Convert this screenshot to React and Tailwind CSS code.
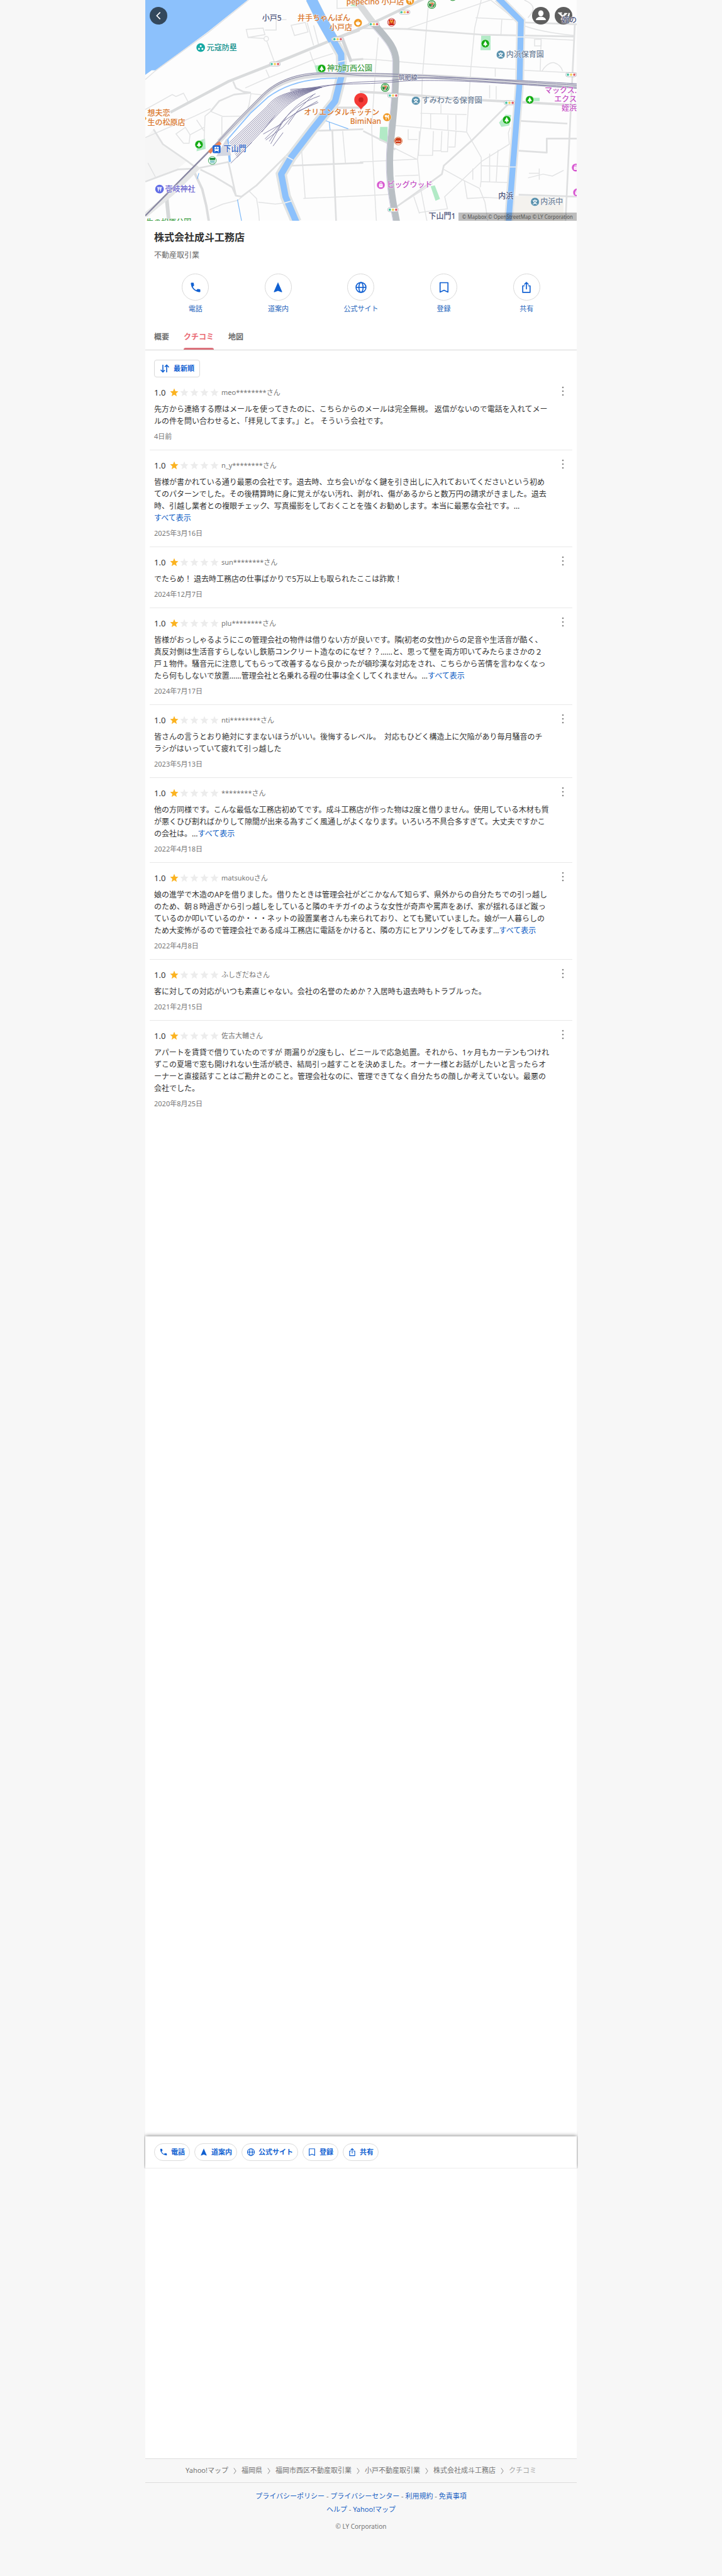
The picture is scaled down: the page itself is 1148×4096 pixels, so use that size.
import React, { useState } from "react";
import clsx from "clsx";

const reviews = [
  {
    user: "meo********さん",
    date: "4日前",
    lines: [
      "先方から連絡する際はメールを使ってきたのに、こちらからのメールは完全無視。 返信がないので電話を入れてメー",
      "ルの件を問い合わせると、「拝見してます。」と。 そういう会社です。",
    ],
  },
  {
    user: "n_y********さん",
    date: "2025年3月16日",
    more: true,
    lines: [
      "皆様が書かれている通り最悪の会社です。退去時、立ち会いがなく鍵を引き出しに入れておいてくださいという初め",
      "てのパターンでした。その後精算時に身に覚えがない汚れ、剥がれ、傷があるからと数万円の請求がきました。退去",
      "時、引越し業者との複眼チェック、写真撮影をしておくことを強くお勧めします。本当に最悪な会社です。…",
      "",
    ],
  },
  {
    user: "sun********さん",
    date: "2024年12月7日",
    lines: ["でたらめ！ 退去時工務店の仕事ばかりで5万以上も取られたここは詐欺！"],
  },
  {
    user: "plu********さん",
    date: "2024年7月17日",
    more: true,
    lines: [
      "皆様がおっしゃるようにこの管理会社の物件は借りない方が良いです。隣(初老の女性)からの足音や生活音が酷く、",
      "真反対側は生活音すらしないし鉄筋コンクリート造なのになぜ？？……と、思って壁を両方叩いてみたらまさかの２",
      "戸１物件。騒音元に注意してもらって改善するなら良かったが頓珍漢な対応をされ、こちらから苦情を言わなくなっ",
      "たら何もしないで放置……管理会社と名乗れる程の仕事は全くしてくれません。…",
    ],
  },
  {
    user: "nti********さん",
    date: "2023年5月13日",
    lines: [
      "皆さんの言うとおり絶対にすまないほうがいい。後悔するレベル。　対応もひどく構造上に欠陥があり毎月騒音のチ",
      "ラシがはいっていて疲れて引っ越した",
    ],
  },
  {
    user: "********さん",
    date: "2022年4月18日",
    more: true,
    lines: [
      "他の方同様です。こんな最低な工務店初めてです。成斗工務店が作った物は2度と借りません。使用している木材も質",
      "が悪くひび割ればかりして隙間が出来る為すごく風通しがよくなります。いろいろ不具合多すぎて。大丈夫ですかこ",
      "の会社は。…",
    ],
  },
  {
    user: "matsukouさん",
    date: "2022年4月8日",
    more: true,
    lines: [
      "娘の進学で木造のAPを借りました。借りたときは管理会社がどこかなんて知らず、県外からの自分たちでの引っ越し",
      "のため、朝８時過ぎから引っ越しをしていると隣のキチガイのような女性が奇声や罵声をあげ、家が揺れるほど蹴っ",
      "ているのか叩いているのか・・・ネットの設置業者さんも来られており、とても驚いていました。娘が一人暮らしの",
      "ため大変怖がるので管理会社である成斗工務店に電話をかけると、隣の方にヒアリングをしてみます…",
    ],
  },
  {
    user: "ふしぎだねさん",
    date: "2021年2月15日",
    lines: ["客に対しての対応がいつも素直じゃない。会社の名誉のためか？入居時も退去時もトラブルった。"],
  },
  {
    user: "佐古大輔さん",
    date: "2020年8月25日",
    lines: [
      "アパートを賃貸で借りていたのですが 雨漏りが2度もし、ビニールで応急処置。それから、1ヶ月もカーテンもつけれ",
      "ずこの夏場で窓も開けれない生活が続き、結局引っ越すことを決めました。オーナー様とお話がしたいと言ったらオ",
      "ーナーと直接話すことはご勘弁とのこと。管理会社なのに、管理できてなく自分たちの顔しか考えていない。最悪の",
      "会社でした。",
    ],
  },
];

function PhoneIcon({ className }) {
  return (
    <svg viewBox="0 0 24 24" className={className} fill="currentColor" aria-hidden="true">
      <path d="M6.6 10.8a15 15 0 0 0 6.6 6.6l2.2-2.2c.3-.3.7-.4 1-.2 1.2.4 2.400.6 3.600.6.6 0 1 .4 1 1V20c0 .6-.4 1-1 1A17 17 0 0 1 3 4c0-.6.4-1 1-1h3.500c.6 0 1 .4 1 1 0 1.200.2 2.400.6 3.600.1.3 0 .7-.2 1z" />
    </svg>
  );
}

function RouteIcon({ className }) {
  return (
    <svg viewBox="0 0 24 24" className={className} fill="currentColor" aria-hidden="true">
      <path d="M12 2 20 20.500l-.8.8L12 18.500l-7.200 2.800-.8-.8z" />
    </svg>
  );
}

function GlobeIcon({ className }) {
  return (
    <svg viewBox="0 0 24 24" className={className} fill="none" stroke="currentColor" strokeWidth="2" aria-hidden="true">
      <circle cx="12" cy="12" r="9.500" />
      <ellipse cx="12" cy="12" rx="4" ry="9.500" />
      <path d="M2.500 12h19" />
    </svg>
  );
}

function BookmarkIcon({ className }) {
  return (
    <svg viewBox="0 0 24 24" className={className} fill="none" stroke="currentColor" strokeWidth="2" strokeLinejoin="round" aria-hidden="true">
      <path d="M4.500 3h15v18L12 17.500 4.500 21z" />
    </svg>
  );
}

function ShareIcon({ className }) {
  return (
    <svg viewBox="0 0 24 24" className={className} fill="none" stroke="currentColor" strokeWidth="2" strokeLinejoin="round" strokeLinecap="round" aria-hidden="true">
      <path d="M8 9H5v12.500h14V9h-3M12 15V2.500M8.500 6 12 2.500 15.500 6" />
    </svg>
  );
}

const actions = [
  { label: "電話", Icon: PhoneIcon },
  { label: "道案内", Icon: RouteIcon },
  { label: "公式サイト", Icon: GlobeIcon },
  { label: "登録", Icon: BookmarkIcon },
  { label: "共有", Icon: ShareIcon },
];

/* ---------- map ---------- */

// the map canvas is 2304 x 1179 units, starting at x = 6
const MAP_W = 2304;
const MAP_H = 1179;

const minorRoads = [
  "M558 0 340 175 60 378 6 425",
  "M545 157 635 150 645 185 555 200ZM555 200 642 206M655 220 697 335M645 160H705V105H760",
  "M785 135 860 120 875 170 803 190ZM870 120 905 243M905 135 932 240",
  "M885 275 900 320 915 350M540 470 640 425 900 320 1010 285M650 372 668 412",
  "M570 500 640 508M570 500 560 560 550 590M355 595 420 622 540 620M355 595 325 620 320 760M415 625V750",
  "M6 585 150 505 170 515 210 498 235 545M6 735 270 620 355 580",
  "M170 715 220 680 245 720 240 765 210 765ZM245 720 320 680M280 640 320 700",
  "M20 870 60 945M350 1120 420 1090 500 1070 560 1020 600 1060 610 1120 615 1179M610 1080 700 1090 780 1080",
  "M840 790 860 1060M850 1060 1170 1045 1320 1038M1060 700 1075 870M1030 0V45L1140 40",
  "M1250 200 1238 330 1215 680 1222 860 1240 1179M1140 315 1240 318 1480 340 1990 370M1152 865 1460 850",
  "M1800 0 1765 150 1745 360 1735 520 1722 705 1800 840 1800 960 1795 1000M1770 95 1970 105M1910 105 1905 190",
  "M1520 0 1505 180 1485 420 1480 660 1460 850 1475 1000 1510 1179M1400 155 1850 0M1850 0 1970 95",
  "M1340 940 1465 935M1340 670 1720 705M1410 690V745H1460M1470 700 1465 830 1540 830 1545 700M1590 700 1585 805H1540M1625 700 1620 810H1585M1665 700 1660 785H1625",
  "M1475 605 1722 612M1530 605V685M1622 615V695M1665 615V695M1585 555V605M1335 790 1455 850",
  "M1600 905 1700 960 1790 1005 1820 1080 1835 1179M1700 960 1805 860 1950 770 1945 710 1955 680M1700 960 1605 1050 1620 1115 1470 1135",
  "M1710 965 1725 1060 1820 1055 1940 1060M1800 885 1980 890M1800 970 1940 975M1845 820V970M1890 800 1880 970M1755 900V960",
  "M1340 1110 1540 980M1440 1050 1470 1140M1845 455V525M1880 460V530M1875 365V410M2085 210H2120V245H2085ZM2120 210 2115 380",
  "M2125 380C2140 350 2170 330 2190 335 2220 345 2230 360 2235 380M2025 375 2310 390M2050 950 2130 930 2180 940 2240 910M2055 925H2110M2110 900V960",
  "M2030 0C2100 30 2080 60 2050 95M2010 130C2080 160 2200 180 2300 190M2015 200 2300 215",
];

const roads = [
  "M1140 150 1400 155 1800 185 2300 195",
  "M475 435 490 470 530 490 570 495M355 595 400 540 480 505 570 495",
  "M50 690 100 770 230 860 290 905M6 970 180 905 280 900 450 865",
  "M300 905 370 940 470 1000 490 1045 520 1050 600 990 760 830 900 690 980 590 1040 470",
  "M450 865 490 1045M780 885 1170 870M880 700 1170 690M1005 700 1025 1179",
  "M1170 700 1300 765 1340 800M1340 1110 1590 930 1600 885 1750 750 1940 560",
  "M2000 645 2260 660M2000 805 2150 815V740L2310 740M2300 130 2250 1179M2030 120 2310 130M2000 1040 2310 1050",
];

const yardTracks = [0, 1, 2, 3, 4, 5, 6, 7, 8, 9, 10];

const trafficLights = [
  [698, 342],
  [1033, 209],
  [1391, 65],
  [1227, 129],
  [1329, 510],
  [1951, 549],
  [2280, 399],
  [1329, 1120],
];

const parks = [
  [948, 366],
  [293, 772],
  [1822, 233],
  [2059, 533],
  [1936, 640],
];

const schools = [
  [1904, 292],
  [1451, 538],
  [2087, 1078],
];

const sevens = [
  [1536, 24],
  [1287, 467],
  [1648, -18],
];

const foods = [
  [1142, 122],
  [1420, 5],
  [1297, 626],
];

const shops = [
  [1264, 988],
  [2305, 895],
  [2312, 1028],
];

const labels = [
  { text: "小戸5", x: 630, y: 98, color: "text-[#4d557c]" },
  { text: "井手ちゃんぽん", x: 1101, y: 98, end: true, color: "text-[#d9752a]" },
  { text: "小戸店", x: 1111, y: 147, end: true, color: "text-[#d9752a]" },
  { text: "pepecino 小戸店", x: 1388, y: 10, end: true, color: "text-[#d9752a]" },
  { text: "元寇防塁", x: 334, y: 254, color: "text-[#12908c]" },
  { text: "神功町西公園", x: 977, y: 366, color: "text-[#43a047]" },
  { text: "想夫恋", x: 18, y: 606, color: "text-[#d9752a]" },
  { text: "生の松原店", x: 18, y: 654, color: "text-[#d9752a]" },
  { text: "下山門", x: 424, y: 797, color: "text-[#2a5fc4]" },
  { text: "壱岐神社", x: 112, y: 1010, color: "text-[#6a63cf]" },
  { text: "生の松原公園", x: 10, y: 1190, color: "text-[#43a047]" },
  { text: "オリエンタルキッチン", x: 1256, y: 600, end: true, color: "text-[#d9752a]" },
  { text: "BimiNan", x: 1266, y: 648, end: true, color: "text-[#d9752a]" },
  { text: "筑肥線", x: 1358, y: 413, small: true, color: "text-[#6b7090]" },
  { text: "すみわたる保育園", x: 1483, y: 538, color: "text-[#6f8299]" },
  { text: "内浜保育園", x: 1933, y: 292, color: "text-[#6f8299]" },
  { text: "内浜中", x: 2116, y: 1078, color: "text-[#6f8299]" },
  { text: "ビッグウッド", x: 1297, y: 988, color: "text-[#c44fc4]" },
  { text: "マックス.", x: 2310, y: 483, end: true, color: "text-[#c44fc4]" },
  { text: "エクス", x: 2310, y: 531, end: true, color: "text-[#c44fc4]" },
  { text: "姪浜", x: 2310, y: 579, end: true, color: "text-[#c44fc4]" },
  { text: "内浜", x: 1891, y: 1047, color: "text-[#4d557c]" },
  { text: "下山門1", x: 1519, y: 1157, color: "text-[#4d557c]" },
  { text: "姪の", x: 2310, y: 107, end: true, color: "text-[#4d557c]" },
];

function MapDrawing() {
  return (
    <svg viewBox="6 0 2304 1179" className="block h-full w-full" fill="none" aria-hidden="true">
      <rect x="6" width="2304" height="1179" fill="#fdfdfd" />
      <path d="M6 740 50 690 100 770 230 860 180 900 6 965Z" fill="#f6f6f6" />
      <path d="M1980 1045 2240 1055V1179H1970Z" fill="#f4f2ee" />
      <path d="M6 0H553L340 170 185 285 60 375H40L6 400Z" fill="#8cc1fc" />
      {/* green areas */}
      <path d="M285 755 325 740 328 795 280 808ZM910 350 960 345 965 390 920 385ZM1800 190H1850V268H1796ZM1260 678H1300V765L1256 750ZM1530 995 1552 990 1580 1062 1556 1072ZM1895 655 1930 612 1960 615 1950 670 1908 678ZM2060 522H2112V540H2060ZM1100 30 1120 15 1130 35Z" fill="#b2eac6" />

      <g stroke="#e2e3e4" strokeWidth="5">
        {minorRoads.map((d) => (
          <path key={d} d={d} />
        ))}
        <circle cx="652" cy="207" r="12" />
      </g>
      <g stroke="#dfe0e1" strokeWidth="9" strokeLinejoin="round">
        {roads.map((d) => (
          <path key={d} d={d} />
        ))}
      </g>
      <path d="M140 600 450 435 780 305 1000 215 1150 155 1270 100 1500 -10" stroke="#d9dbdc" strokeWidth="15" />
      <path d="M270 925 310 1010 332 1100 345 1179M1152 490 1340 500 1700 530 2000 545 2310 562" stroke="#dcddde" strokeWidth="13" />
      <path d="M120 1060 132 1179" stroke="#d6d8d9" strokeWidth="20" />
      <path d="M6 1150 150 1030 290 890" stroke="#e6e7e7" strokeWidth="26" />
      <path d="M1060 200 1105 320 1170 315M960 575H1170" stroke="#dcddde" strokeWidth="11" />
      <path d="M1060 215 1105 330" stroke="#d2d5d8" strokeWidth="16" />

      {/* rivers */}
      <path d="M890 -10 945 100 1010 215 1052 290 1055 400 1020 540 900 690 785 840 732 930 755 1050 812 1185" stroke="#e1e4e4" strokeWidth="58" />
      <path d="M890 -10 945 100 1010 215" stroke="#8cc1fc" strokeWidth="56" />
      <path d="M1010 215 1052 290 1055 400 1020 540 900 690 785 840 732 930 755 1050 812 1185" stroke="#8cc1fc" strokeWidth="34" strokeLinejoin="round" />
      <path d="M1030 332 1080 322M755 833 795 855M745 1085 790 1073" stroke="#eef0f0" strokeWidth="6" />
      <path d="M1890 -10 2012 112 2005 440 1968 900 1946 1185" stroke="#e6e7e7" strokeWidth="48" />
      <path d="M1890 -10 2012 112 2005 440 1968 900 1946 1185" stroke="#8cc1fc" strokeWidth="31" />
      <path d="M1985 197H2035M1950 892H1985" stroke="#eef0f0" strokeWidth="5" />
      <path d="M445 745 458 865" stroke="#8cc1fc" strokeWidth="12" />
      <path d="M445 745 570 602 660 520C740 460 850 415 1030 418" stroke="#8cc1fc" strokeWidth="6" />
      <path d="M498 1065 520 1179M292 925 284 955M970 645 1090 688M988 650 993 695" stroke="#7db9f8" strokeWidth="4" />

      {/* railway */}
      <path d="M400 755 500 650 640 508C720 430 830 400 1000 400H1170C1500 400 1700 420 2310 460" stroke="#dddee0" strokeWidth="24" />
      <path d="M1000 212 1150 160" stroke="#d9dbdc" strokeWidth="15" />
      <path d="M385 835 440 740 465 830Z" fill="#d5d8e2" />
      {/* trunk road */}
      <path d="M1120 -10C1150 20 1190 80 1230 130" stroke="#d9dbdc" strokeWidth="34" />
      <path d="M1230 130C1290 200 1345 250 1346 330 1345 560 1325 650 1314 800 1305 950 1325 1060 1350 1190" stroke="#b9bfc4" strokeWidth="35" />
      <path d="M1212 140C1272 210 1326 260 1327 330 1326 560 1306 650 1295 800 1286 950 1306 1060 1331 1190" stroke="#cdc9df" strokeWidth="3" />
      <g stroke="#77759c" strokeWidth="3">
        <path d="M6 1155 400 755 500 650 640 508C720 430 830 395 1000 392H1170C1500 396 1700 420 2310 455" />
        <path d="M6 1149 394 755 494 645 635 503C720 422 830 388 960 388L1170 404C1500 408 1700 430 2310 465" />
        <path d="M780 478 950 465C1050 440 1170 436 1300 432 1500 405 1700 412 2310 447" />
        <path d="M780 486 960 458C1060 446 1170 450 1310 440 1500 420 1700 428 2310 472" />
      </g>
      <path d="M6 1152 398 757" stroke="#8c8ba3" strokeWidth="7" />
      <g stroke="#77759c" strokeWidth="3">
        {yardTracks.map((i) => (
          <path
            key={i}
            d={`M${455 + i * 4} ${762 + i * 8} ${655 + i * 5} ${570 + i * 5}C${700 + i * 6} ${510 + i * 5} ${760 + i * 5} ${486 + i * 3} 950 465`}
          />
        ))}
        <path d="M462 872 575 760M628 705 700 615M636 716 735 660C770 610 800 560 915 500M645 742 720 670C770 600 850 540 938 512M650 748 740 680 800 610 925 540M676 768 740 650 830 590 930 547M688 780 742 708M668 755 732 660M768 665 820 590 905 505" />
      </g>
      <path d="M348 815 365 795M385 778 408 762" stroke="#e9845a" strokeWidth="18" />

      {/* pins */}
      {trafficLights.map(([x, y]) => (
        <g key={`${x}-${y}`}>
          <rect x={x - 29} y={y - 11} width="58" height="22" rx="11" fill="#fff" stroke="#b9bcc4" strokeWidth="3" />
          <circle cx={x - 17} cy={y} r="6.500" fill="#4bc4a5" />
          <circle cx={x} cy={y} r="6.500" fill="#f2d25c" />
          <circle cx={x + 17} cy={y} r="6.500" fill="#e2636a" />
        </g>
      ))}
      {parks.map(([x, y]) => (
        <g key={`${x}-${y}`}>
          <circle cx={x} cy={y} r="22" fill="#14ab14" stroke="#fff" strokeWidth="2" />
          <path d={`M${x} ${y - 15}L${x + 12} ${y + 7}H${x + 3}V${y + 14}H${x - 3}V${y + 7}H${x - 12}Z`} fill="#fff" />
        </g>
      ))}
      {schools.map(([x, y]) => (
        <g key={`${x}-${y}`} stroke="#fff" strokeWidth="4">
          <circle cx={x} cy={y} r="23" fill="#5890ac" strokeWidth="2" />
          <path d={`M${x} ${y - 13}V${y - 6}M${x - 12} ${y - 6}H${x + 12}M${x - 8} ${y - 5}C${x - 4} ${y + 6} ${x + 4} ${y + 10} ${x + 12} ${y + 12}M${x + 8} ${y - 5}C${x + 4} ${y + 6} ${x - 4} ${y + 10} ${x - 12} ${y + 12}`} />
        </g>
      ))}
      {sevens.map(([x, y]) => (
        <g key={`${x}-${y}`}>
          <circle cx={x} cy={y} r="21" fill="#fff" stroke="#2f9a3c" strokeWidth="4" />
          <circle cx={x} cy={y} r="16" fill="#1f8a35" />
          <path d={`M${x - 12} ${y - 12}H${x + 12}V${y - 4}L${x + 2} ${y + 14}H${x - 8}L${x + 2} ${y - 3}H${x - 12}Z`} fill="#fff" />
          <path d={`M${x - 10} ${y - 9}H${x + 10}V${y - 4}H${x - 10}Z`} fill="#ee7f2d" />
          <path d={`M${x + 9} ${y - 4}L${x} ${y + 12}H${x - 5}L${x + 3} ${y - 4}Z`} fill="#d8343a" />
        </g>
      ))}
      {foods.map(([x, y]) => (
        <g key={`${x}-${y}`}>
          <circle cx={x} cy={y} r="22" fill="#f0951c" stroke="#fff" strokeWidth="2" />
          {y === 122 ? (
            <path d={`M${x - 11} ${y - 2}H${x + 11}C${x + 11} ${y + 8} ${x + 6} ${y + 12} ${x} ${y + 12}S${x - 11} ${y + 8} ${x - 11} ${y - 2}ZM${x - 4} ${y - 10}V${y - 2}M${x + 2} ${y - 12}V${y - 2}`} fill="#fff" stroke="#fff" strokeWidth="3" />
          ) : (
            <path d={`M${x - 10} ${y - 12}V${y - 3}H${x - 1}V${y - 12}M${x - 5} ${y - 12}V${y + 13}M${x + 9} ${y + 13}V${y - 11}C${x + 3} ${y - 9} ${x + 3} ${y} ${x + 4} ${y + 2}H${x + 8}`} stroke="#fff" strokeWidth="4" />
          )}
        </g>
      ))}
      {shops.map(([x, y]) => (
        <g key={`${x}-${y}`}>
          <circle cx={x} cy={y} r="22" fill="#d757d0" stroke="#fff" strokeWidth="2" />
          <rect x={x - 10} y={y - 6} width="20" height="18" rx="3" fill="#fff" />
          <path d={`M${x - 5} ${y - 6}V${y - 12}H${x + 5}V${y - 6}`} stroke="#fff" strokeWidth="3" />
          <path d={`M${x - 4} ${y}C${x - 3} ${y + 5} ${x + 3} ${y + 5} ${x + 4} ${y}`} stroke="#d757d0" strokeWidth="2" />
        </g>
      ))}
      {/* ruins */}
      <circle cx="302" cy="254" r="23" fill="#16a9a5" />
      <circle cx="302" cy="246" r="5" fill="#fff" />
      <circle cx="293" cy="261" r="5" fill="#fff" />
      <circle cx="311" cy="261" r="5" fill="#fff" />
      {/* shrine */}
      <circle cx="82" cy="1010" r="23" fill="#5f6be6" />
      <path d="M69 1001H95M71 1009H93M76 1001V1022M88 1001V1022" stroke="#fff" strokeWidth="4" />
      {/* station */}
      <rect x="366" y="776" width="42" height="42" rx="6" fill="#1f66d6" />
      <rect x="375" y="784" width="24" height="22" rx="5" fill="#fff" />
      <path d="M387 784V796M375 795H399" stroke="#1f66d6" strokeWidth="3" />
      <path d="M380 806 376 812M394 806 398 812" stroke="#fff" strokeWidth="3" />
      {/* supermarket */}
      <circle cx="364" cy="857" r="21" fill="#fff" stroke="#2c9d49" strokeWidth="3" />
      <path d="M350 843H379V855H350Z" fill="#1f8f3f" />
      <path d="M352 861H377M352 869H377" stroke="#2a9ea0" strokeWidth="4" />
      {/* burger shop */}
      <circle cx="1321" cy="119" r="21" fill="#fff" stroke="#c4342e" strokeWidth="3" />
      <rect x="1306" y="104" width="30" height="30" rx="5" fill="#c8141a" />
      <path d="M1311 129C1312 103 1319 103 1321 125 1323 103 1330 103 1331 129" stroke="#f8c33a" strokeWidth="4" />
      {/* gyudon shop */}
      <circle cx="1357" cy="753" r="21" fill="#fff" stroke="#d1652c" strokeWidth="3" />
      <path d="M1343 741 1350 736H1364L1371 741 1375 753 1370 766H1344L1339 753Z" fill="#cf3d17" />
      <path d="M1344 754H1370" stroke="#fff" strokeWidth="5" strokeDasharray="5 3" />
      {/* selected place */}
      <path d="M1158 587C1152 566 1122 563 1122 533A36 36 0 0 1 1194 533C1194 563 1164 566 1158 587Z" fill="#f43a36" />
      <circle cx="1158" cy="533" r="13" fill="#c9211f" />
      <circle cx="2" cy="632" r="9" fill="#f0951c" />
    </svg>
  );
}

function MapView() {
  return (
    <div className="relative aspect-[2304/1179] w-full overflow-hidden">
      <MapDrawing />

      <button type="button" aria-label="戻る" className="absolute left-[7px] top-[11px] flex size-7 items-center justify-center rounded-full bg-[#33485c] text-white">
        <svg viewBox="0 0 24 24" className="size-4" fill="none" stroke="currentColor" strokeWidth="2.500" aria-hidden="true">
          <path d="M16 4 8 12l8 8" />
        </svg>
      </button>
      <div className="absolute right-[7px] top-[11px] flex gap-2">
        <button type="button" aria-label="アカウント" className="flex size-7 items-center justify-center rounded-full bg-[#5d5d5d] text-white">
          <svg viewBox="0 0 24 24" className="size-5" fill="currentColor" aria-hidden="true">
            <ellipse cx="12" cy="7.500" rx="5" ry="5.800" />
            <path d="M2.500 20.500c0-4 3-5.500 7-6.500h5c4 1 7 2.500 7 6.500z" />
          </svg>
        </button>
        <button type="button" aria-label="Yahoo!" className="flex size-7 items-center justify-center rounded-full bg-[#5d5d5d] text-white">
          <svg viewBox="0 0 32 32" className="size-7" fill="none" stroke="currentColor" aria-hidden="true">
            <path d="M8.500 11.500 14.500 17M21 12 14.500 17V22" strokeWidth="3" />
            <path d="M6 11h7.500M17 12h6M11 22h7" strokeWidth="1.800" />
            <path d="M26.500 11 24.500 18.500" strokeWidth="2.600" />
            <circle cx="23.600" cy="21" r="1.500" fill="currentColor" stroke="none" />
          </svg>
        </button>
      </div>

      {labels.map((l) => (
        <span
          key={l.text}
          className={clsx(
            "absolute -translate-y-1/2 whitespace-nowrap font-medium [text-shadow:0_0_2px_#fff,0_0_2px_#fff]",
            l.small ? "text-[10px] leading-[14px]" : "text-xs",
            l.end && "-translate-x-full",
            l.color
          )}
          style={{ left: `${((l.x - 6) / MAP_W) * 100}%`, top: `${(l.y / MAP_H) * 100}%` }}
        >
          {l.text}
        </span>
      ))}

      <p className="absolute bottom-0 right-0 bg-black/25 px-[6px] text-[8px] leading-[13px] text-[#555]">
        © Mapbox © OpenStreetMap © LY Corporation
      </p>
    </div>
  );
}

/* ---------- reviews ---------- */

function Star({ on }) {
  return (
    <svg viewBox="0 0 24 24" className={clsx("size-[14px]", on ? "text-[#fbb321]" : "text-[#ececec]")} fill="currentColor" aria-hidden="true">
      <path d="m12 1 3.200 7.500 8.100.7-6.200 5.300 1.900 8L12 18.200l-7 4.300 1.900-8L.7 9.200l8.100-.7z" />
    </svg>
  );
}

function Review({ review, last }) {
  return (
    <li className={clsx("px-[7px] pb-3 pt-[15px]", !last && "border-b border-[#e8e8e8]")}>
      <div className="flex h-[18px] items-center">
        <span className="w-[25px] text-[13px] leading-[18px] text-[#333]">1.0</span>
        <span className="flex gap-[2px]">
          {[1, 2, 3, 4, 5].map((n) => (
            <Star key={n} on={n === 1} />
          ))}
        </span>
        <span className="ml-1 text-[11px] leading-[18px] text-[#757575]">{review.user}</span>
        <button type="button" aria-label="メニュー" className="-mt-1 ml-auto flex w-4 items-center justify-center text-[#858585]">
          <svg viewBox="0 0 16 20" className="h-5 w-4" fill="currentColor" aria-hidden="true">
            <circle cx="8" cy="4" r="1.300" />
            <circle cx="8" cy="10" r="1.300" />
            <circle cx="8" cy="16" r="1.300" />
          </svg>
        </button>
      </div>
      <p className="mt-2 text-xs leading-[19px] text-[#333]">
        {review.lines.map((line, i) => (
          <span key={i} className="block whitespace-nowrap">
            {line}
            {review.more && i === review.lines.length - 1 && (
              <a href="#more" className="text-[#0b5cc4]">すべて表示</a>
            )}
          </span>
        ))}
      </p>
      <p className="mt-[6px] text-[11px] leading-[18px] text-[#767676]">{review.date}</p>
    </li>
  );
}

/* ---------- footer ---------- */

const crumbs = ["Yahoo!マップ", "福岡県", "福岡市西区不動産取引業", "小戸不動産取引業", "株式会社成斗工務店"];

const footerLinks = [
  ["プライバシーポリシー", "プライバシーセンター", "利用規約", "免責事項"],
  ["ヘルプ", "Yahoo!マップ"],
];

function Footer() {
  return (
    <footer className="text-[11px]">
      <nav className="flex h-[39px] items-center justify-center border-y border-[#dcdcdc] text-[#757575]">
        {crumbs.map((c) => (
          <React.Fragment key={c}>
            <a href="#crumb">{c}</a>
            <svg viewBox="0 0 6 12" className="mx-2 h-[10px] w-[5px]" fill="none" stroke="currentColor" aria-hidden="true">
              <path d="M1 .5 5 6 1 11.500" />
            </svg>
          </React.Fragment>
        ))}
        <span className="text-[#a3a3a3]">クチコミ</span>
      </nav>
      <div className="pt-[10px] text-center leading-[21px] text-[#767676]">
        {footerLinks.map((row) => (
          <p key={row[0]}>
            {row.map((text, i) => (
              <React.Fragment key={text}>
                {i > 0 && " - "}
                <a href="#link" className="text-[#1a62c4]">{text}</a>
              </React.Fragment>
            ))}
          </p>
        ))}
      </div>
      <p className="mt-2 text-center text-[10px] leading-[18px] text-[#757575]">© LY Corporation</p>
    </footer>
  );
}

export default function App() {
  const [tab, setTab] = useState("クチコミ");

  return (
    <div className="min-h-screen bg-[#f7f7f7] font-['Noto_Sans','Noto_Sans_CJK_JP',sans-serif]">
      <div className="mx-auto max-w-[686px]">
        <main className="bg-white">
          <div className="min-h-[3397px]">
            <MapView />

            <header className="px-[14px] pt-[14px]">
              <h1 className="text-base font-bold leading-6 text-[#333]">株式会社成斗工務店</h1>
              <p className="mt-2 text-xs leading-[18px] text-[#666]">不動産取引業</p>
              <div className="mt-5 grid grid-cols-5">
                {actions.map(({ label, Icon }) => (
                  <button key={label} type="button" className="flex flex-col items-center gap-1 text-[11px] leading-[18px] text-[#1f66bd]">
                    <span className="flex size-[43px] items-center justify-center rounded-full border border-[#d9d9d9]">
                      <Icon className="size-5 text-[#1060d2]" />
                    </span>
                    {label}
                  </button>
                ))}
              </div>
            </header>

            <nav className="mt-[27px] flex gap-[23px] border-b border-[#d6d6d6] px-[14px]">
              {["概要", "クチコミ", "地図"].map((name) => (
                <button
                  key={name}
                  type="button"
                  onClick={() => setTab(name)}
                  className="text-xs font-bold leading-[18px]"
                >
                  <span className={clsx("block pb-2", tab === name ? "text-[#ea6a74]" : "text-[#6b6b6b]")}>{name}</span>
                  <span className={clsx("block h-[3px] rounded-t-[3px]", tab === name && "bg-[#dc717b]")} />
                </button>
              ))}
            </nav>

            <section className="px-[7px] pt-[15px]">
              <button type="button" className="mx-[7px] flex h-[28px] items-center gap-[6px] rounded border border-[#d9d9d9] px-2 text-[11px] font-bold text-[#1060d2]">
                <svg viewBox="0 0 16 14" className="h-[14px] w-4" fill="none" stroke="currentColor" strokeWidth="1.600" aria-hidden="true">
                  <path d="M5 1v11.500M1.500 9 5 12.500 8 9.500M11 13V1.500M8 4.500 11 1.500 14.500 5" />
                </svg>
                最新順
              </button>
              <ul>
                {reviews.map((r, i) => (
                  <Review key={r.user} review={r} last={i === reviews.length - 1} />
                ))}
              </ul>
            </section>
          </div>

          <div className="flex h-[51px] gap-[7px] border-b border-[#ececec] bg-white px-[14px] pt-[11px] shadow-[0_-1px_6px_rgba(0,0,0,0.45)] [clip-path:inset(-12px_-2px_0_-2px)]">
            {actions.map(({ label, Icon }) => (
              <button key={label} type="button" className="flex h-7 items-center gap-[5px] rounded-full border border-[#dcdcdc] px-[7px] text-[11px] font-bold text-[#1060d2]">
                <Icon className="size-[14px]" />
                {label}
              </button>
            ))}
          </div>
          <div className="h-[461px]" />
        </main>
        <Footer />
      </div>
    </div>
  );
}
